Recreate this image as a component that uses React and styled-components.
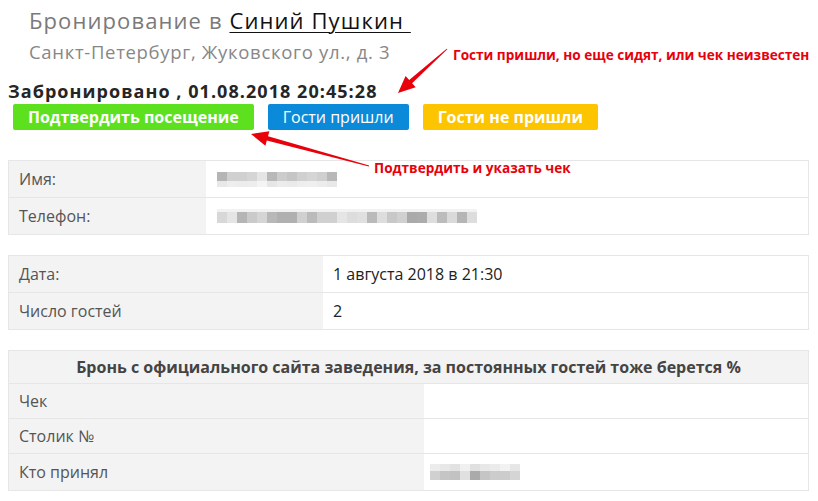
import React from "react";
import styled, { createGlobalStyle } from "styled-components";

const GlobalStyle = createGlobalStyle`
  body {
    margin: 0;
    background: #fff;
    font-family: "Open Sans", "Liberation Sans", sans-serif;
  }
`;

const RED = "#e8000b";

const Page = styled.div`
  position: relative;
  width: 801px;
  padding: 5px 8px 0;
`;

const Title = styled.h1`
  margin: 0 0 0 21px;
  font-size: 22px;
  line-height: 30px;
  letter-spacing: 1.1px;
  font-weight: 400;
  color: #7a7a7a;

  a {
    color: #111;
    text-decoration: underline;
    text-underline-offset: 3px;
    text-decoration-thickness: 1px;
  }
`;

const Address = styled.div`
  margin: 4px 0 0 21px;
  font-size: 18.5px;
  line-height: 26px;
  letter-spacing: 0.68px;
  color: #878787;
`;

const Status = styled.div`
  margin-top: 14px;
  font-size: 18px;
  line-height: 24px;
  letter-spacing: 1.05px;
  font-weight: 700;
  color: #252525;
`;

const Actions = styled.div`
  display: flex;
  gap: 14px;
  margin: 1px 0 0 5px;
`;

const Button = styled.button`
  height: 26px;
  padding: 0 15px;
  border: 0;
  border-radius: 2px;
  font-family: inherit;
  font-size: 16px;
  font-weight: ${(p) => (p.$bold ? 700 : 400)};
  color: #fff;
  background: ${(p) => p.$bg};
  cursor: pointer;
`;

const Table = styled.div`
  margin-top: ${(p) => p.$mt}px;
  border: 1px solid #e6e6e6;
  font-size: 16px;
  line-height: 20px;
`;

const Row = styled.div`
  display: grid;
  grid-template-columns: ${(p) => p.$label}px 1fr;
  & + & {
    border-top: 1px solid #e6e6e6;
  }
`;

const Label = styled.div`
  background: #f3f3f3;
  color: #555;
  padding: ${(p) => p.$pad}px 10px;
`;

const Value = styled.div`
  display: flex;
  align-items: center;
  color: #222;
  padding: ${(p) => p.$pad}px ${(p) => p.$left}px;
`;

const HeaderRow = styled.div`
  background: #f3f3f3;
  border-bottom: 1px solid #e6e6e6;
  padding: 6px 10px;
  text-align: center;
  font-weight: 700;
  color: #444;
`;

const Note = styled.div`
  position: absolute;
  left: ${(p) => p.$x}px;
  top: ${(p) => p.$y}px;
  font-size: 13.6px;
  line-height: 16px;
  font-weight: 700;
  color: ${RED};
  white-space: nowrap;
`;

const Overlay = styled.svg`
  position: absolute;
  left: 0;
  top: 0;
  pointer-events: none;
`;

function arrowPoints(tail, tip) {
  const dx = tip[0] - tail[0];
  const dy = tip[1] - tail[1];
  const len = Math.hypot(dx, dy);
  const ux = dx / len;
  const uy = dy / len;
  const nx = -uy;
  const ny = ux;
  const L = 17;
  const W = 7.5;
  const neck = [tip[0] - ux * L, tip[1] - uy * L];
  const p = (b, k) => `${(b[0] + nx * k).toFixed(1)},${(b[1] + ny * k).toFixed(1)}`;
  return [
    p(tail, 0.4),
    p(neck, 2.2),
    p(neck, W),
    `${tip[0]},${tip[1]}`,
    p(neck, -W),
    p(neck, -2.2),
    p(tail, -0.4),
  ].join(" ");
}

function Mosaic({ rows, cell = 10 }) {
  const width = Math.max(...rows.map((r) => r.shades.length)) * cell;
  const height = rows.reduce((s, r) => s + r.h, 0);
  let y = 0;
  return (
    <svg width={width} height={height} style={{ display: "block" }}>
      {rows.map((r, ri) => {
        const top = y;
        y += r.h;
        return r.shades.map((c, i) => (
          <rect key={`${ri}-${i}`} x={i * cell} y={top} width={cell} height={r.h} fill={c} />
        ));
      })}
    </svg>
  );
}

const nameBlur = [
  { h: 9, shades: ["#b5b5b5", "#d0d0d0", "#d0d0d0", "#d5d5d5", "#e5e5e5", "#b8b8b8", "#cccccc", "#c5c5c5", "#d0d0d0", "#d5d5d5", "#cfcfcf", "#b8b8b8"] },
  { h: 6, shades: ["#e8e8e8", "#eeeeee", "#ececec", "#ededed", "#f4f4f4", "#e6e6e6", "#ececec", "#eaeaea", "#eeeeee", "#efefef", "#ececec", "#e8e8e8"] },
];

const phoneBlur = [
  { h: 3, shades: Array(26).fill("#f2f2f2") },
  { h: 11, shades: ["#d8d8d8", "#e5e5e5", "#b5b5b5", "#cacaca", "#d5d5d5", "#b8b8b8", "#b0b0b0", "#b0b0b0", "#d0d0d0", "#bbbbbb", "#d0d0d0", "#d0d0d0", "#e5e5e5", "#dddddd", "#e0e0e0", "#bababa", "#dddddd", "#c8c8c8", "#d0d0d0", "#aaaaaa", "#acacac", "#dedede", "#bcbcbc", "#dadada", "#b5b5b5", "#dddddd"] },
];

const staffBlur = [
  { h: 7, shades: ["#ececec", "#e8e8e8", "#e2e2e2", "#f0f0f0", "#e0e0e0", "#e8e8e8", "#ebebeb", "#f2f2f2", "#e6e6e6"] },
  { h: 9, shades: ["#d0d0d0", "#c5c5c5", "#c2c2c2", "#e0e0e0", "#aaaaaa", "#c5c5c5", "#cccccc", "#cccccc", "#d5d5d5"] },
];

export default function App() {
  return (
    <>
      <GlobalStyle />
      <Page>
        <Title>
          Бронирование в <a href="#">Синий Пушкин&nbsp;</a>
        </Title>
        <Address>Санкт-Петербург, Жуковского ул., д. 3</Address>
        <Status>Забронировано , 01.08.2018 20:45:28</Status>
        <Actions>
          <Button $bg="#5de11e" $bold>Подтвердить посещение</Button>
          <Button $bg="#0a8ad8">Гости пришли</Button>
          <Button $bg="#fdc400" $bold>Гости не пришли</Button>
        </Actions>

        <Table $mt={30}>
          <Row $label={197}>
            <Label $pad={8}>Имя:</Label>
            <Value $pad={8} $left={11}>
              <Mosaic rows={nameBlur} />
            </Value>
          </Row>
          <Row $label={197}>
            <Label $pad={8}>Телефон:</Label>
            <Value $pad={8} $left={11}>
              <Mosaic rows={phoneBlur} />
            </Value>
          </Row>
        </Table>

        <Table $mt={20}>
          <Row $label={314}>
            <Label $pad={8}>Дата:</Label>
            <Value $pad={8} $left={10}>1 августа 2018 в 21:30</Value>
          </Row>
          <Row $label={314}>
            <Label $pad={8}>Число гостей</Label>
            <Value $pad={8} $left={10}>2</Value>
          </Row>
        </Table>

        <Table $mt={20}>
          <HeaderRow>Бронь с официального сайта заведения, за постоянных гостей тоже берется %</HeaderRow>
          <Row $label={415}>
            <Label $pad={7}>Чек</Label>
            <Value $pad={7} $left={6} />
          </Row>
          <Row $label={415}>
            <Label $pad={7}>Столик №</Label>
            <Value $pad={7} $left={6} />
          </Row>
          <Row $label={415}>
            <Label $pad={8}>Кто принял</Label>
            <Value $pad={8} $left={6}>
              <Mosaic rows={staffBlur} />
            </Value>
          </Row>
        </Table>

        <Note $x={453} $y={47}>Гости пришли, но еще сидят, или чек неизвестен</Note>
        <Note $x={374} $y={160}>Подтвердить и указать чек</Note>
        <Overlay width="818" height="501">
          <polygon points={arrowPoints([447, 49], [398, 93])} fill={RED} />
          <polygon points={arrowPoints([369, 166], [251, 134])} fill={RED} />
        </Overlay>
      </Page>
    </>
  );
}
